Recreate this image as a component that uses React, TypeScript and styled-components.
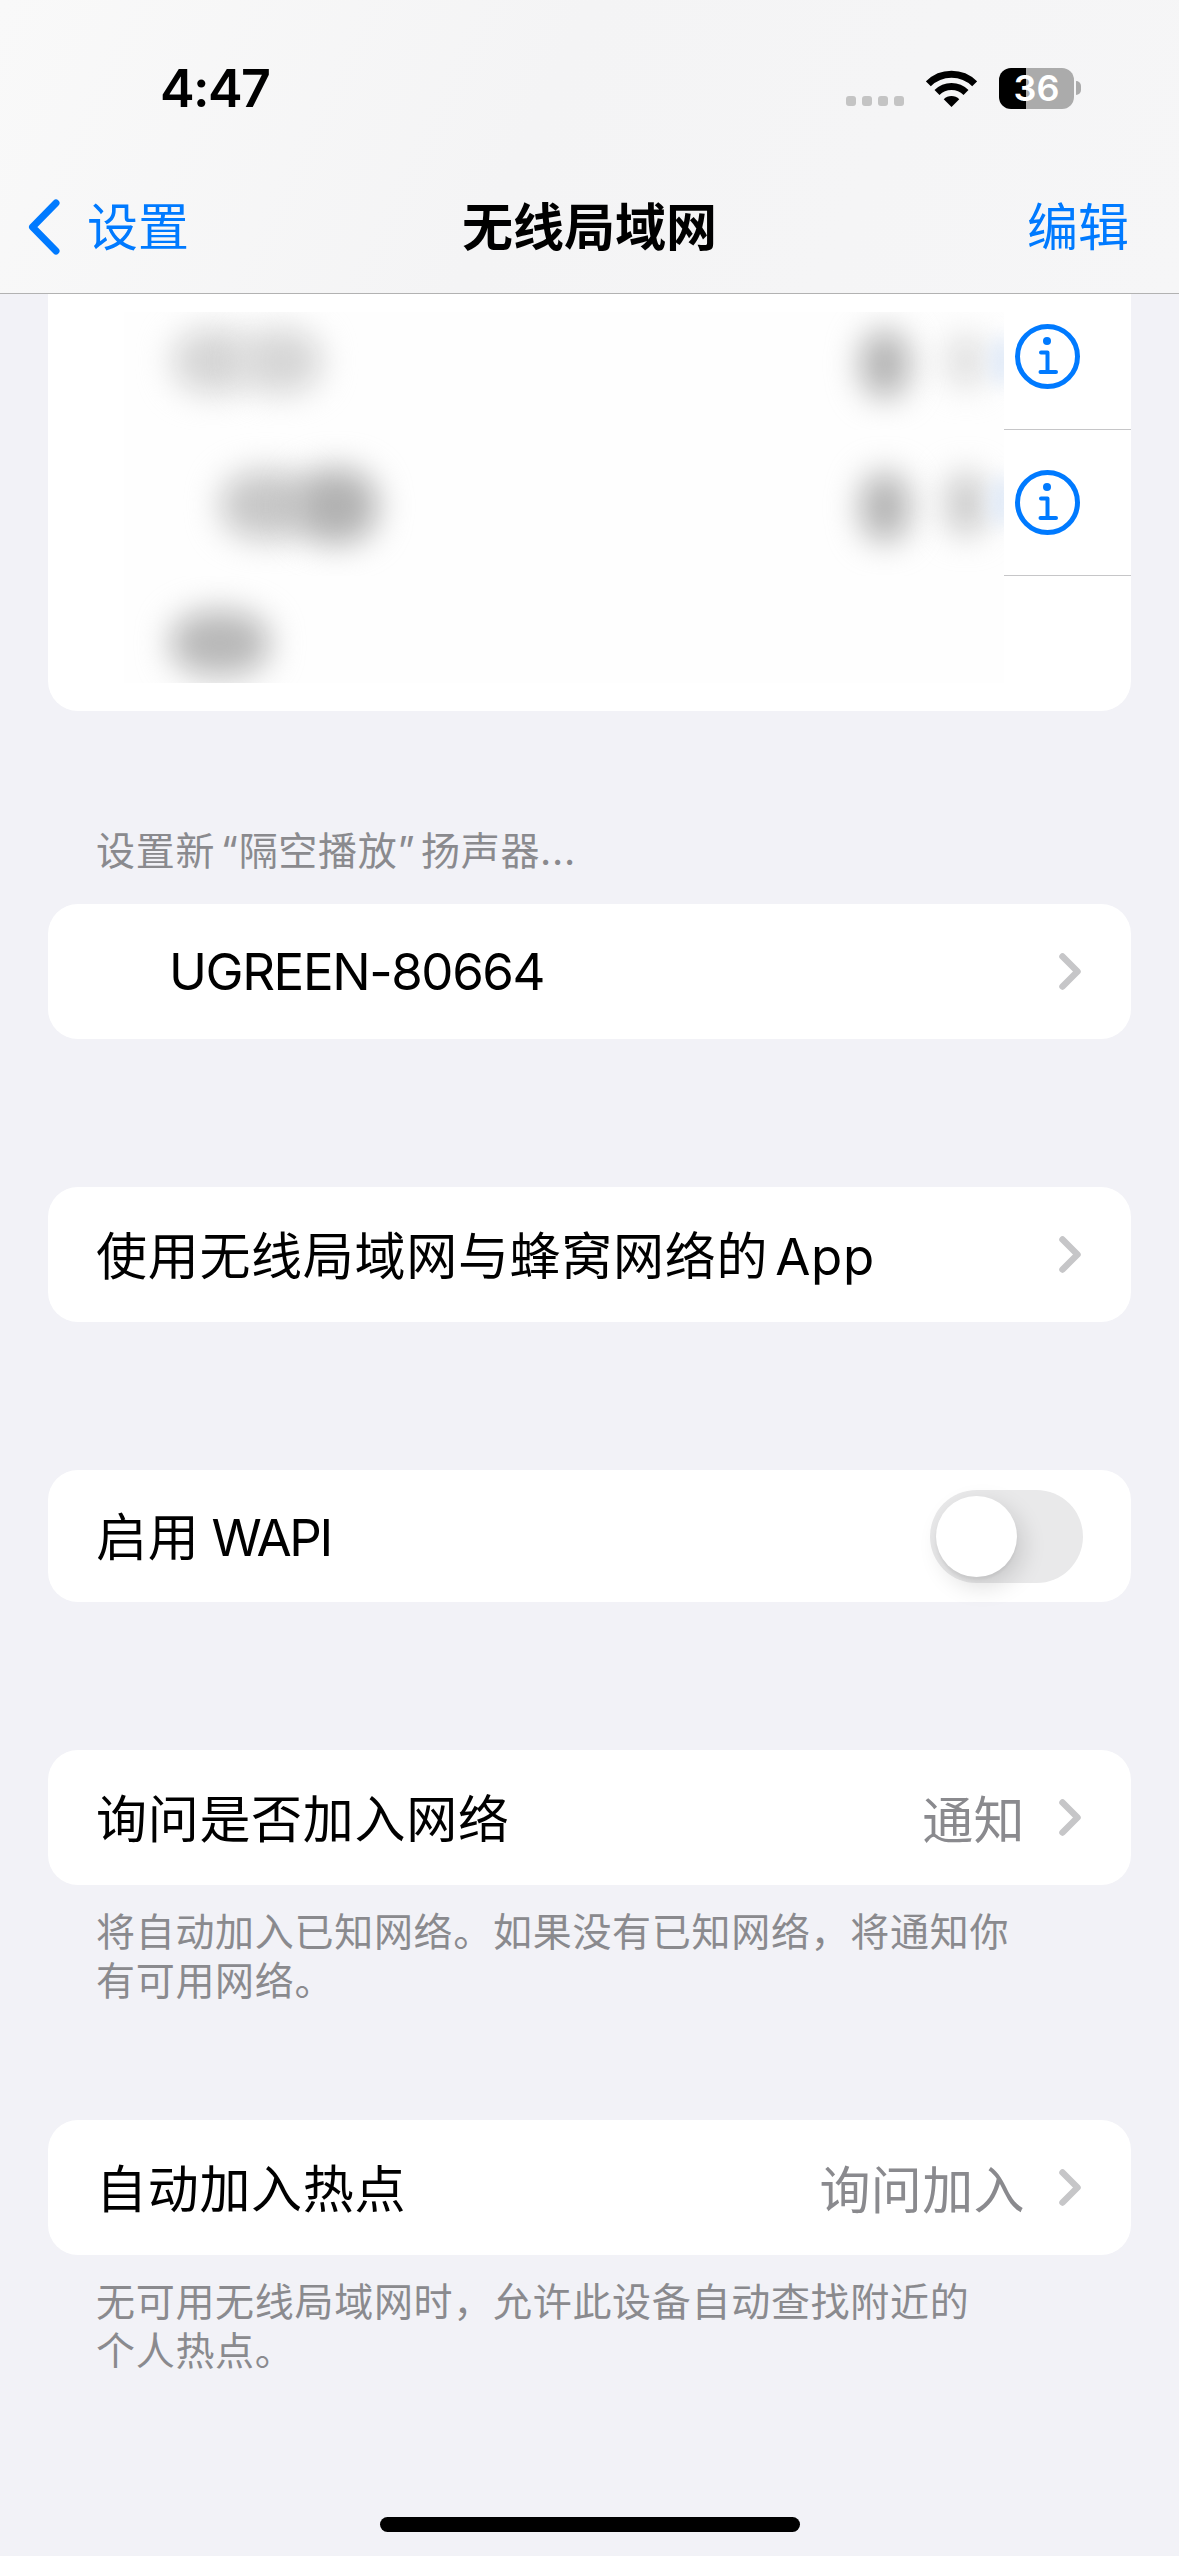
import styled, { createGlobalStyle } from "styled-components";

const GlobalStyle = createGlobalStyle`
  html, body {
    margin: 0;
    padding: 0;
    background: #f2f2f7;
  }

  * {
    box-sizing: border-box;
  }
`;

const BLUE = "#007aff";
const FONT = `Inter, "Noto Sans CJK SC", sans-serif`;

// ====================
// Icons
// ====================
const Chevron = () => (
  <ChevronIcon viewBox="0 0 22 37" aria-hidden="true">
    <path
      d="M3.5 3.5 L18.5 18.5 L3.5 33.5"
      fill="none"
      stroke="#c6c6c8"
      strokeWidth="6.5"
      strokeLinecap="round"
      strokeLinejoin="round"
    />
  </ChevronIcon>
);

const InfoIcon = () => (
  <InfoSvg viewBox="0 0 65 65" aria-hidden="true">
    <circle cx="32.5" cy="32.5" r="30" fill="none" stroke={BLUE} strokeWidth="5" />
    <circle cx="32" cy="17" r="4" fill={BLUE} />
    <path
      d="M26 28.5 H32.5 V48 M25.5 48 H41"
      fill="none"
      stroke={BLUE}
      strokeWidth="4"
      strokeLinecap="round"
      strokeLinejoin="round"
    />
  </InfoSvg>
);

const WifiIcon = () => (
  <svg width="51" height="37" viewBox="0 0 51 37" aria-hidden="true">
    <path d="M2.34 13.84 A32.75 32.75 0 0 1 48.66 13.84" fill="none" stroke="#000" strokeWidth="7" />
    <path d="M11 22.5 A20.5 20.5 0 0 1 40 22.5" fill="none" stroke="#000" strokeWidth="7" />
    <path d="M25.5 37 L17.72 29.22 A11 11 0 0 1 33.28 29.22 Z" fill="#000" />
  </svg>
);

const BackIcon = () => (
  <BackSvg viewBox="0 0 32 56" aria-hidden="true">
    <path
      d="M28 4 L4.5 28 L28 52"
      fill="none"
      stroke={BLUE}
      strokeWidth="7"
      strokeLinecap="round"
      strokeLinejoin="round"
    />
  </BackSvg>
);

export default function App() {
  return (
    <Page>
      <GlobalStyle />
      <Header>
        <StatusBar>
          <Time>4:47</Time>
          <StatusIcons>
            <Signal>
              <SignalDot />
              <SignalDot />
              <SignalDot />
              <SignalDot />
            </Signal>
            <WifiIcon />
            <Battery>
              <BatteryBody $level={36}>36</BatteryBody>
              <BatteryNub />
            </Battery>
          </StatusIcons>
        </StatusBar>
        <NavBar>
          <BackLink>
            <BackIcon />
            <NavAction>设置</NavAction>
          </BackLink>
          <NavTitle>无线局域网</NavTitle>
          <EditAction>编辑</EditAction>
        </NavBar>
      </Header>

      <Content>
        <NetworksCard>
          <NetworkRow>
            <Redacted $top={28} $height={118}>
              <Smudge $x={48} $y={16} $w={82} $h={66} $c="#d6d6d6" />
              <Smudge $x={116} $y={16} $w={82} $h={66} $c="#d6d6d6" />
              <Smudge $x={736} $y={18} $w={50} $h={68} $c="#b2b2b2" />
              <Smudge $x={822} $y={22} $w={40} $h={54} $c="#dedede" />
              <Tint $y={24} />
            </Redacted>
            <InfoCell>
              <InfoIcon />
            </InfoCell>
          </NetworkRow>
          <NetworkRow>
            <Redacted $top={0} $height={146}>
              <Smudge $x={96} $y={40} $w={92} $h={70} $c="#c8c8c8" />
              <Smudge $x={170} $y={38} $w={84} $h={76} $c="#b2b2b2" />
              <Smudge $x={736} $y={42} $w={50} $h={70} $c="#b2b2b2" />
              <Smudge $x={822} $y={42} $w={40} $h={64} $c="#c8c8c8" />
              <Tint $y={46} />
            </Redacted>
            <InfoCell>
              <InfoIcon />
            </InfoCell>
          </NetworkRow>
          <LastNetworkRow>
            <Redacted $top={0} $height={107}>
              <Smudge $x={46} $y={34} $w={100} $h={66} $c="#b8b8b8" />
            </Redacted>
          </LastNetworkRow>
        </NetworksCard>

        <SectionTitle>设置新 “隔空播放” 扬声器...</SectionTitle>
        <Card>
          <Indented>UGREEN-80664</Indented>
          <Chevron />
        </Card>

        <SpacedCard>
          <Label>使用无线局域网与蜂窝网络的 App</Label>
          <Chevron />
        </SpacedCard>

        <ToggleCard>
          <Label>
            启用 <Latin>WAPI</Latin>
          </Label>
          <Toggle>
            <Knob />
          </Toggle>
        </ToggleCard>

        <SpacedCard>
          <Label>询问是否加入网络</Label>
          <Value>通知</Value>
          <Chevron />
        </SpacedCard>
        <Footnote>
          将自动加入已知网络。如果没有已知网络，将通知你
          <br />
          有可用网络。
        </Footnote>

        <FootnotedCard>
          <Label>自动加入热点</Label>
          <Value>询问加入</Value>
          <Chevron />
        </FootnotedCard>
        <Footnote>
          无可用无线局域网时，允许此设备自动查找附近的
          <br />
          个人热点。
        </Footnote>
      </Content>

      <HomeBar />
    </Page>
  );
}

const Page = styled.div`
  width: 1179px;
  height: 2556px;
  overflow: hidden;

  display: flex;
  flex-direction: column;

  background: #f2f2f7;
  color: #000;
  font-family: ${FONT};
`;

const Header = styled.header`
  position: relative;
  z-index: 2;

  height: 294px;
  flex-shrink: 0;

  background: linear-gradient(115deg, #f9f9f9 0%, #f4f4f5 45%, #f6f6f7 100%);
  border-bottom: 1px solid #b2b2b2;
`;

const StatusBar = styled.div`
  height: 176px;

  display: flex;
  align-items: center;
  justify-content: space-between;

  padding: 0 98px 0 160px;
`;

const Time = styled.div`
  font-size: 52px;
  font-weight: 600;
  letter-spacing: -1.6px;
`;

const StatusIcons = styled.div`
  display: flex;
  align-items: center;
`;

const Signal = styled.div`
  display: flex;
  align-items: center;
  gap: 6px;

  margin: 26px 22px 0 0;
`;

const SignalDot = styled.span`
  width: 10px;
  height: 10px;
  border-radius: 3px;
  background: #c4c4c4;
`;

const Battery = styled.div`
  display: flex;
  align-items: center;
  margin-left: 22px;
`;

const BatteryBody = styled.div<{ $level: number }>`
  width: 75px;
  height: 41px;
  border-radius: 12px;

  display: flex;
  align-items: center;
  justify-content: center;

  background: linear-gradient(
    90deg,
    #000 ${(props) => props.$level}%,
    #ababab ${(props) => props.$level}%
  );
  color: #fff;
  font-size: 36px;
  font-weight: 600;
`;

const BatteryNub = styled.span`
  width: 5px;
  height: 14px;
  margin-left: 2px;
  border-radius: 0 6px 6px 0;
  background: #ababab;
`;

const NavBar = styled.nav`
  height: 102px;

  display: grid;
  grid-template-columns: 1fr auto 1fr;
  align-items: center;

  padding: 0 50px;
`;

const BackLink = styled.div`
  display: flex;
  align-items: center;
  gap: 27px;
  margin-left: -22px;
`;

const BackSvg = styled.svg`
  width: 32px;
  height: 56px;
`;

const NavAction = styled.span`
  padding-bottom: 6px;
  color: ${BLUE};
  font-size: 51px;
`;

const EditAction = styled(NavAction)`
  justify-self: end;
`;

const NavTitle = styled.h1`
  margin: 0;
  padding-bottom: 6px;
  font-size: 51px;
  font-weight: 600;
`;

const Content = styled.main`
  margin-top: -10px;
  padding: 0 48px;

  display: flex;
  flex-direction: column;
`;

const Card = styled.section`
  height: 135px;
  flex-shrink: 0;

  display: flex;
  align-items: center;

  padding: 0 50px 0 48px;

  background: #fff;
  border-radius: 30px;
`;

const SpacedCard = styled(Card)`
  margin-top: 148px;
`;

const ToggleCard = styled(SpacedCard)`
  height: 132px;
  padding-right: 48px;
`;

const FootnotedCard = styled(Card)`
  margin-top: 115px;
`;

const NetworksCard = styled.section`
  height: 427px;
  flex-shrink: 0;

  display: flex;
  flex-direction: column;

  background: #fff;
  border-radius: 0 0 30px 30px;
  overflow: hidden;
`;

const NetworkRow = styled.div`
  height: 146px;
  flex-shrink: 0;
  display: flex;
`;

const LastNetworkRow = styled(NetworkRow)`
  height: 135px;
`;

const Redacted = styled.div<{ $top: number; $height: number }>`
  position: relative;
  overflow: hidden;

  width: 880px;
  height: ${(props) => props.$height}px;
  margin: ${(props) => props.$top}px 0 0 76px;

  background: #fefefe;
`;

const Smudge = styled.span<{
  $x: number;
  $y: number;
  $w: number;
  $h: number;
  $c: string;
}>`
  position: absolute;
  left: ${(props) => props.$x}px;
  top: ${(props) => props.$y}px;

  width: ${(props) => props.$w}px;
  height: ${(props) => props.$h}px;

  border-radius: 45%;
  background: ${(props) => props.$c};
  filter: blur(16px);
`;

const Tint = styled.span<{ $y: number }>`
  position: absolute;
  top: ${(props) => props.$y}px;
  right: -10px;

  width: 24px;
  height: 50px;

  border-radius: 50%;
  background: #e0eaf8;
  filter: blur(9px);
`;

const InfoCell = styled.div`
  width: 127px;
  height: 146px;
  flex-shrink: 0;

  display: flex;
  align-items: center;

  padding-left: 11px;
  border-bottom: 1px solid #c6c6c8;
`;

const InfoSvg = styled.svg`
  width: 65px;
  height: 65px;
`;

const ChevronIcon = styled.svg`
  width: 22px;
  height: 37px;
  flex-shrink: 0;
  margin-left: auto;
`;

const SectionTitle = styled.h2`
  margin: 115px 0 29px;
  padding-left: 48px;

  color: #8a8a8e;
  font-size: 39px;
  font-weight: 400;
  letter-spacing: 0.7px;
  word-spacing: -6px;
  line-height: 49px;
`;

const Label = styled.span`
  padding-bottom: 4px;
  font-size: 51px;
  letter-spacing: 0.7px;
  word-spacing: -8px;
  white-space: nowrap;
`;

const Latin = styled.span`
  margin-left: 5px;
  letter-spacing: -2.4px;
`;

const Indented = styled(Label)`
  margin-left: 73px;
  padding-bottom: 0;
  letter-spacing: -1.4px;
`;

const Value = styled.span`
  margin: 0 34px 0 auto;
  padding-bottom: 2px;

  color: #8a8a8e;
  font-size: 51px;
  letter-spacing: 0.4px;

  & + ${ChevronIcon} {
    margin-left: 0;
  }
`;

const Footnote = styled.p`
  margin: 22px 0 0;
  padding-left: 48px;

  color: #8a8a8e;
  font-size: 39px;
  letter-spacing: 0.7px;
  line-height: 49px;
  white-space: nowrap;
`;

const Toggle = styled.div`
  width: 153px;
  height: 93px;
  margin-left: auto;
  padding: 6px;

  border-radius: 47px;
  background: #e9e9ea;
`;

const Knob = styled.div`
  width: 81px;
  height: 81px;
  border-radius: 50%;

  background: #fff;
  box-shadow: 6px 9px 24px rgba(0, 0, 0, 0.14), 0 3px 3px rgba(0, 0, 0, 0.05);
`;

const HomeBar = styled.div`
  width: 420px;
  height: 15px;
  flex-shrink: 0;

  align-self: center;
  margin: auto 0 24px;

  border-radius: 8px;
  background: #000;
`;
